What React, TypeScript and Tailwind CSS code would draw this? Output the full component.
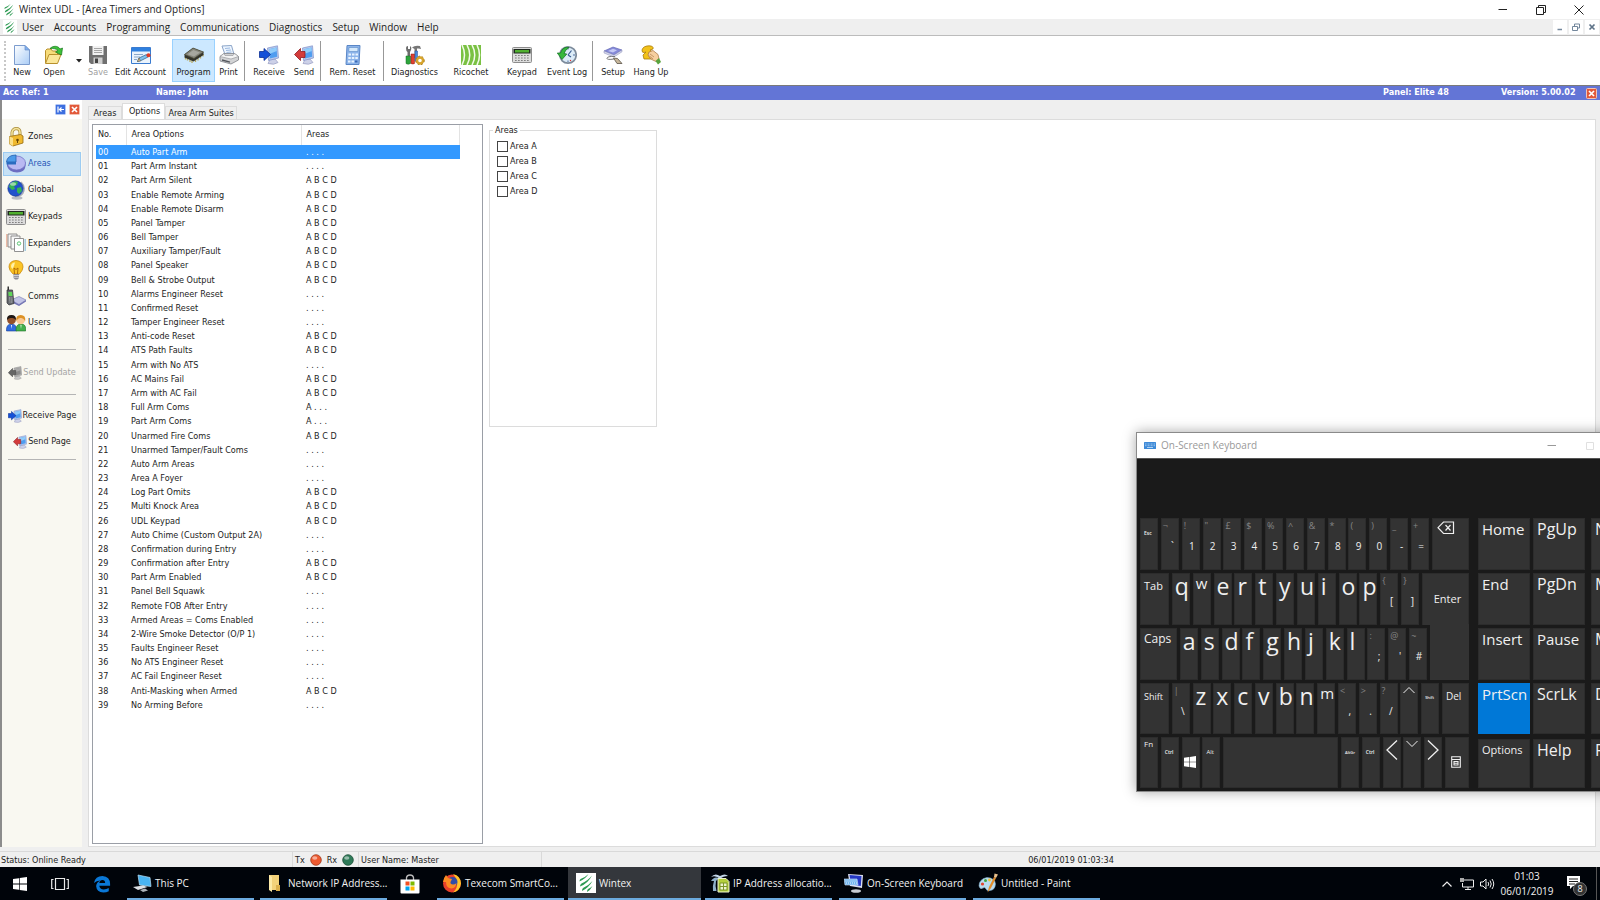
import React, { useState } from 'react';

type Glyph = React.FC<{ className?: string }>;

const WintexLogo: Glyph = ({ className }) => (
  <svg viewBox="0 0 20 20" className={className}>
    <g fill="#2c9a52">
      <path d="M12.500 1 Q9.500 6 3.500 8.500 Q3.500 6.500 4.500 6 Q9 4.500 12.500 1Z" />
      <path d="M16 2.500 Q12 10.500 4 13.500 Q4 11.500 5.500 10.500 Q11.500 8 16 2.500Z" />
      <path d="M16.500 8 Q12.500 15 6 18 Q6 16 7 15 Q12.500 12.500 16.500 8Z" />
      <path d="M16.500 13 Q14.500 17 11 19 Q11 17 12 16 Q14.500 15 16.500 13Z" />
    </g>
  </svg>
);

const NewIcon: Glyph = ({ className }) => (
  <svg viewBox="0 0 20 20" className={className}>
    <defs>
      <linearGradient id="sheet" x1="0" y1="0" x2="1" y2="1">
        <stop offset="0" stopColor="#fff" />
        <stop offset="1" stopColor="#a9ccf6" />
      </linearGradient>
    </defs>
    <path d="M2.500.500H13L17.500 5V19.500H2.500Z" fill="url(#sheet)" stroke="#7c9cce" />
    <path d="M13 .500V5H17.500Z" fill="#7fb0f0" stroke="#6b8fc8" strokeWidth=".7" />
  </svg>
);

const OpenIcon: Glyph = ({ className }) => (
  <svg viewBox="0 0 20 20" className={className}>
    <path d="M1.500 18V5.500L3 4H7L8.500 6H13.500V9" fill="#f7dc7a" stroke="#b8902c" />
    <path d="M1.500 18.500L5 9.500H17L13.500 18.500Z" fill="#fbe79a" stroke="#b8902c" />
    <path d="M6 3.500C9 .500 14 .500 16 4L18.500 3L17.500 10L11.500 7L14 5.500C12 3.500 9.500 3.500 6 3.500Z" fill="#3ec13a" stroke="#16771b" strokeWidth=".7" />
  </svg>
);

const SaveIcon: Glyph = ({ className }) => (
  <svg viewBox="0 0 20 20" className={className}>
    <path d="M1 1H19V19H3L1 17Z" fill="#707070" />
    <path d="M4.500 1H15.500V10H4.500Z" fill="#f2f2f2" />
    <path d="M6 3.500H14M6 5.500H14M6 7.500H14" stroke="#a5a5a5" />
    <path d="M5.500 12.500H14.500V19H5.500Z" fill="#cfcfcf" />
    <path d="M7 13.500H10V18H7Z" fill="#444" />
  </svg>
);

const EditAccountIcon: Glyph = ({ className }) => (
  <svg viewBox="0 0 20 20" className={className}>
    <path d="M.500 2.500H19.500V18.500H.500Z" fill="#eaf3fc" stroke="#3a7bd0" />
    <path d="M1 3H19V6.500H1Z" fill="#2f80df" />
    <path d="M3 9.500H12M3 12H9M3 14.500H6" stroke="#89a7c9" />
    <path d="M6.500 16.500L8 13L15.500 9.500L17 12L9.500 15.800Z" fill="#7fc1ec" stroke="#376a96" strokeWidth=".8" />
    <path d="M6.500 16.500L8 13L9.500 15.800Z" fill="#f0c98d" stroke="#5b4a2e" strokeWidth=".5" />
    <circle cx="17.500" cy="10.300" r="2" fill="#e03a25" />
  </svg>
);

const ChipIcon: Glyph = ({ className }) => (
  <svg viewBox="0 0 20 20" className={className}>
    <path d="M1.500 12V14.500M3.500 13V15.500M6 14.500V17M8 15.500V18M11.500 17V14.500M14 15.500V13M16.500 13.500V11M19 11.500V9" stroke="#b8aa62" strokeWidth="1.300" />
    <path d="M.500 9.500L9 3L19.500 7V10L9.500 16.500L.500 12.500Z" fill="#34342c" />
    <path d="M.500 9.500L9 3L19.500 7L10 13.500Z" fill="#85857b" stroke="#4a4a35" strokeWidth=".7" />
    <path d="M3.500 9.300L9.300 5L16 7.500L10 11.500Z" fill="#a7a79f" />
  </svg>
);

const PrinterIcon: Glyph = ({ className }) => (
  <svg viewBox="0 0 20 20" className={className}>
    <path d="M3 1L12.500.500L15 9.500H6Z" fill="#edf5ff" stroke="#8ba4c8" />
    <path d="M6 3.500L11 3M7 5.500L12 5M7.500 7.500L12.500 7" stroke="#9bb9df" />
    <path d="M1 11.500L5 8.500H15.500L19.500 11.500V15L12 19L1 16Z" fill="#d2d3d5" stroke="#7d8087" strokeWidth=".8" />
    <path d="M1 11.500L12 14L19.500 11.500L15.500 8.500L14 10.500H6L5 8.500Z" fill="#f4f4f4" stroke="#8e9096" strokeWidth=".6" />
    <path d="M3 15L11 17.200" stroke="#53565d" strokeWidth="1.300" />
  </svg>
);

const Monitor = ({ grey = false }: { grey?: boolean }) => (
  <>
    <path d="M11 14.500L16 14L19 17.500Q15 20.500 9 18.500Z" fill={grey ? '#c9c9c9' : '#cdd1e8'} stroke={grey ? '#999' : '#8b91ba'} strokeWidth=".6" />
    <path d="M8.500 3L18.500.800L19.500 13L9.500 15.500Z" fill={grey ? '#b5b5b5' : '#b9c8ec'} stroke={grey ? '#8c8c8c' : '#7f92ca'} strokeWidth=".7" />
    <path d="M10 4.300L17.500 2.500L18.200 11.800L10.800 13.500Z" fill={grey ? '#8b8b8b' : '#4f9df0'} />
    <path d="M10 4.300L17.500 2.500L17.800 6L10.300 9Z" fill={grey ? '#a9a9a9' : '#90ccfa'} />
  </>
);

const ReceiveIcon: Glyph = ({ className }) => (
  <svg viewBox="0 0 20 20" className={className}>
    <Monitor />
    <path d="M.500 6.500H5V3.500L11.500 9.500L5 15.500V12.500H.500Z" fill="#1450d8" stroke="#0b2f94" strokeWidth=".8" />
  </svg>
);

const SendIcon: Glyph = ({ className }) => (
  <svg viewBox="0 0 20 20" className={className}>
    <Monitor />
    <path d="M11 6.500H6.500V3.500L.500 9.500L6.500 15.500V12.500H11Z" fill="#d33b3b" stroke="#8e1c22" strokeWidth=".8" />
  </svg>
);

const SendGreyIcon: Glyph = ({ className }) => (
  <svg viewBox="0 0 20 20" className={className}>
    <Monitor grey />
    <path d="M11 6.500H6.500V3.500L.500 9.500L6.500 15.500V12.500H11Z" fill="#666" stroke="#444" strokeWidth=".8" />
  </svg>
);

const CalculatorIcon: Glyph = ({ className }) => (
  <svg viewBox="0 0 20 20" className={className}>
    <path d="M4 .500H17L16 19.500H3Z" fill="#8cb4ea" stroke="#5a86c6" />
    <path d="M6 2.500H15L14.800 6.500H5.800Z" fill="#d5e9fb" stroke="#4b7cbd" strokeWidth=".5" />
    <g fill="#e8f3ff">
      <path d="M5.500 8.500H8V10.500H5.500ZM9 8.500H11.500V10.500H9ZM12.500 8.500H15V10.500H12.500Z" />
      <path d="M5.300 12H7.800V14H5.300ZM8.800 12H11.300V14H8.800ZM12.300 12H14.800V14H12.300Z" />
      <path d="M5 15.500H7.500V17.500H5ZM8.500 15.500H11V17.500H8.500Z" />
    </g>
    <path d="M12 15.500H14.500V17.500H12Z" fill="#3a69b4" />
  </svg>
);

const ToolsIcon: Glyph = ({ className }) => (
  <svg viewBox="0 0 20 20" className={className}>
    <path d="M1 3Q1 1 3 1V4H5V1Q7 2 6 5L5 7V12H2.500V7Q1 6 1 3Z" fill="#6c6c6c" />
    <path d="M7 2.500Q10 0 15 1L16 4L13.500 3.500H12V13H9.500V4Z" fill="#777" />
    <path d="M1 11H5.500V18.500Q3 20 1 18.500Z" fill="#2ea53c" stroke="#126a20" strokeWidth=".5" />
    <path d="M6 9H9.500V18.500Q8 19.500 6 18.500Z" fill="#e04030" stroke="#8c1a12" strokeWidth=".5" />
    <path d="M10 6H12.500V16H10Z" fill="#4a8ae0" stroke="#214c94" strokeWidth=".5" />
    <circle cx="15" cy="15.500" r="3" fill="none" stroke="#d8a52c" strokeWidth="2.400" />
    <circle cx="15" cy="15.500" r="4.300" fill="none" stroke="#a87a18" strokeWidth="1" strokeDasharray="1.800 1.800" />
  </svg>
);

const RicochetIcon: Glyph = ({ className }) => (
  <svg viewBox="0 0 20 20" className={className}>
    <path d="M0 0H20V20H0Z" fill="#7ac143" />
    <path d="M1 0Q6 10 1 20M6 0Q11.500 10 6 20M11 0Q16.500 10 11 20M16 0Q21 10 16 20" fill="none" stroke="#f4faee" strokeWidth="1.500" />
  </svg>
);

const KeypadIcon: Glyph = ({ className }) => (
  <svg viewBox="0 0 20 20" className={className}>
    <rect x=".500" y="2.500" width="19" height="15" rx="1" fill="#dcdcdc" stroke="#8d8d8d" />
    <path d="M1.500 4H18.500V8.500H1.500Z" fill="#202820" />
    <path d="M3 5H17V7.500H3Z" fill="#4faf2f" />
    <path d="M3 10.500H17M3 13H17M3 15.500H17" stroke="#808080" strokeWidth="1" strokeDasharray="1.700 1.300" />
  </svg>
);

const EventLogIcon: Glyph = ({ className }) => (
  <svg viewBox="0 0 20 20" className={className}>
    <circle cx="11" cy="10" r="8.200" fill="#dcecf8" stroke="#7d8b9b" strokeWidth="1.700" />
    <path d="M11 3V4.500M11 15.500V17M16 10H18" stroke="#4f6c9d" />
    <path d="M11 10L14.500 5.500M11 10L14 12" stroke="#385a8f" strokeWidth="1.200" />
    <path d="M12 2.500Q6 1 3.500 8L.300 8L5 14.500L9.800 9L7 8.500Q8 5 12 2.500Z" fill="#36b83c" stroke="#117021" strokeWidth=".7" />
    <circle cx="13.500" cy="15.500" r=".7" fill="#d33" />
  </svg>
);

const SetupIcon: Glyph = ({ className }) => (
  <svg viewBox="0 0 20 20" className={className}>
    <path d="M1 6L10 2L19 5L11 10Z" fill="#8589d8" stroke="#5b5fae" strokeWidth=".6" />
    <path d="M1 6L11 10L19 5V6.800L11 12L1 8Z" fill="#d7d9ec" stroke="#8488b7" strokeWidth=".5" />
    <path d="M5 6L10 3.800L14 5.200L10 7.500Z" fill="#c5c9f5" />
    <path d="M12 11.500Q4 11 4 13.500Q4 15 11 14" fill="none" stroke="#777" />
    <path d="M10.500 13L14.500 13.500L19 18.500L14 18.500Z" fill="#c7b79c" stroke="#5a5348" strokeWidth=".8" />
  </svg>
);

const HangUpIcon: Glyph = ({ className }) => (
  <svg viewBox="0 0 20 20" className={className}>
    <path d="M1 5Q2 1 8 .800Q13 1 12 4L9 5L14 9L13 14L3 14L2 10L5 7L3 7.500Q1 8 1 5Z" fill="#f2c21a" stroke="#a97b0a" strokeWidth=".8" />
    <path d="M8 7L12 5.500L17 9.500L18 14L15 16.500Q11 15 9 13L7 10Z" fill="#f6cfa0" stroke="#a5703c" strokeWidth=".7" />
    <path d="M9 9L13 12M8.500 11L12 14" stroke="#a5703c" strokeWidth=".6" />
    <path d="M14.500 16L18 13L20 17L17 19.500Z" fill="#59a33e" />
  </svg>
);

const LockIcon: Glyph = ({ className }) => (
  <svg viewBox="0 0 20 20" className={className}>
    <path d="M6 9V5.500Q6.500 2 10 1.500Q14 1.500 14 5.500V8" fill="none" stroke="#a88a35" strokeWidth="3" />
    <path d="M6 9V5.500Q6.500 2 10 1.500Q14 1.500 14 5.500V8" fill="none" stroke="#f3e29a" strokeWidth="1.600" />
    <path d="M3.500 9.500L14.500 7.500L17 9V16L7 19L3.500 17Z" fill="#f0b92e" stroke="#96690f" strokeWidth=".8" />
    <path d="M3.500 9.500L7 11V19L3.500 17Z" fill="#fbe08a" />
    <circle cx="11.500" cy="13" r="1.300" fill="#694806" />
    <path d="M11 13H12V16H11Z" fill="#694806" />
  </svg>
);

const PieIcon: Glyph = ({ className }) => (
  <svg viewBox="0 0 20 20" className={className}>
    <path d="M1 8V12Q3 18 11 18.500Q19 18 19.500 12V8Z" fill="#6d6ec2" />
    <ellipse cx="10.500" cy="9" rx="9" ry="7" fill="#b9b9f2" stroke="#6b6cc0" strokeWidth=".7" />
    <path d="M10 8V1L6 1.500Q1 3 .500 8Z" fill="#4c9ae8" stroke="#245fae" strokeWidth=".8" />
    <path d="M.500 8H10V10.500H.500Z" fill="#2a6cc0" />
  </svg>
);

const GlobeIcon: Glyph = ({ className }) => (
  <svg viewBox="0 0 20 20" className={className}>
    <ellipse cx="11" cy="18" rx="5.500" ry="1.700" fill="#b9bdc4" />
    <path d="M15 2Q20 7 17 13Q14 17 9 16.500" fill="none" stroke="#a7adb8" strokeWidth="1.500" />
    <circle cx="9.500" cy="8.500" r="7.700" fill="#2052cc" stroke="#17348a" strokeWidth=".6" />
    <path d="M4 4Q8 0 12 2L11 5L8 6L9 9L6 10L3 7ZM11 8L15 7L16 11L13 14L11 12Z" fill="#34b354" />
    <ellipse cx="7" cy="4" rx="3" ry="1.800" fill="#fff" opacity=".5" />
  </svg>
);

const ExpandersIcon: Glyph = ({ className }) => (
  <svg viewBox="0 0 20 20" className={className}>
    <path d="M.800 1.500V14" stroke="#dd7755" strokeWidth="1.500" strokeDasharray="1 1" />
    <path d="M2 1H11V14H2Z" fill="#f3f3f3" stroke="#858585" strokeWidth=".9" />
    <path d="M5 3H14V16H5Z" fill="#f7f7f7" stroke="#858585" strokeWidth=".9" />
    <path d="M8.500 5.500H17.500V18.500H8.500Z" fill="#fff" stroke="#858585" strokeWidth=".9" />
    <circle cx="13" cy="10.500" r="1.700" fill="none" stroke="#4bbd65" strokeWidth=".9" />
    <path d="M19.200 6.500V18.500" stroke="#4aa0d0" strokeWidth="1.500" strokeDasharray="1 1" />
  </svg>
);

const BulbIcon: Glyph = ({ className }) => (
  <svg viewBox="0 0 20 20" className={className}>
    <path d="M10 .500Q17 1 17 7Q17 10 13.500 14H7Q3 10 3 7Q3 1 10 .500Z" fill="#fbc425" stroke="#c98a0c" strokeWidth=".8" />
    <path d="M5 6Q5.500 2.500 9 2.500Q8 7 6.500 9Q5 8 5 6Z" fill="#fff0a8" />
    <path d="M8.500 14L8 8L10 9.500L12 8L11.500 14" fill="none" stroke="#b26d07" />
    <path d="M7.500 14H13V18L11.500 19.500H9L7.500 18Z" fill="#8c8c95" />
    <path d="M7.500 15.500H13M7.500 17.300H13" stroke="#dfdfe5" strokeWidth=".8" />
  </svg>
);

const CommsIcon: Glyph = ({ className }) => (
  <svg viewBox="0 0 20 20" className={className}>
    <path d="M5 14L13 10.500L20 14L13 18.500Z" fill="#c2c4e6" stroke="#8486b9" strokeWidth=".7" />
    <path d="M5 14L13 18.500L20 14V15.500L13 20L5 16Z" fill="#7173b4" />
    <path d="M1.500.500H3V5H1.500Z" fill="#333" />
    <path d="M1 4H6.500L8 17.500L3 19L1 17Z" fill="#64676c" stroke="#303236" strokeWidth=".7" />
    <path d="M2.300 6H6L6.500 10H2.700Z" fill="#5fd457" />
    <path d="M3 12H6.500M3.200 14H6.800M3.500 16H7" stroke="#c4c7cc" strokeWidth=".9" strokeDasharray="1 .600" />
  </svg>
);

const UsersIcon: Glyph = ({ className }) => (
  <svg viewBox="0 0 20 20" className={className}>
    <path d="M.500 18Q0 11 5.500 11Q11 11 10.500 18Z" fill="#2f6be0" stroke="#173d94" strokeWidth=".6" />
    <circle cx="5.500" cy="7" r="4.300" fill="#93512a" />
    <path d="M1 7Q.500 2 5.500 2Q10.300 2 10 7Q8 4.500 5.500 5Q3 4.500 1 7Z" fill="#1e1714" />
    <path d="M10 18Q9.500 11 15 11Q20.500 11 19.700 18Z" fill="#44b04c" stroke="#1e7228" strokeWidth=".6" />
    <circle cx="14.700" cy="7" r="4.300" fill="#fac892" />
    <path d="M10.300 8Q9.500 2 14.700 2Q20 2 19.200 8Q17 4.500 14.700 5Q12 4.500 10.300 8Z" fill="#dd9226" />
    <path d="M5 12L5.500 16L6 12ZM14.500 12L15 16L15.500 12Z" fill="#fff" />
  </svg>
);

const CloseSquare: Glyph = ({ className }) => (
  <svg viewBox="0 0 11 11" className={className}>
    <rect x=".500" y=".500" width="10" height="10" rx="1" fill="#e2593a" stroke="#f3c3b5" />
    <path d="M3 3L8 8M8 3L3 8" stroke="#fff" strokeWidth="1.700" />
  </svg>
);

const PinSquare: Glyph = ({ className }) => (
  <svg viewBox="0 0 11 11" className={className}>
    <rect x=".500" y=".500" width="10" height="10" rx="1" fill="#3d6fe0" stroke="#b4c7f3" />
    <path d="M3 2.500V8.500M4.500 5.500H9M6.500 3.500L4.500 5.500L6.500 7.500" fill="none" stroke="#fff" strokeWidth="1.200" />
  </svg>
);

const WindowsIcon: Glyph = ({ className }) => (
  <svg viewBox="0 0 14 14" className={className}>
    <path d="M0 2L6 1.200V6.600H0ZM6.700 1.100L14 0V6.600H6.700ZM0 7.400H6V12.800L0 12ZM6.700 7.400H14V14L6.700 12.900Z" fill="#fff" />
  </svg>
);

const TaskViewIcon: Glyph = ({ className }) => (
  <svg viewBox="0 0 18 14" className={className}>
    <path d="M4.500 1.500H13.500V12.500H4.500ZM2.500 2.500H.700V11.500H2.500M15.500 2.500H17.300V11.500H15.500" fill="none" stroke="#e8e8e8" strokeWidth="1.200" />
  </svg>
);

const EdgeIcon: Glyph = ({ className }) => (
  <svg viewBox="0 0 20 20" className={className}>
    <path d="M1 9Q2.500 1 10.500 1Q19 1.500 19 10V12H7Q7.500 16 12 16Q15 16 17.500 14.500V18Q15 19.500 11.500 19.500Q4 19 3.500 12.500Q3.500 8.500 8 6Q4 6 1 9ZM7 8.800H13.500Q13.500 5.500 10.500 5.500Q7.500 5.500 7 8.800Z" fill="#0a78d7" />
  </svg>
);

const ThisPcIcon: Glyph = ({ className }) => (
  <svg viewBox="0 0 20 20" className={className}>
    <path d="M6 2L18 4.500L19 13.500L7.500 12Z" fill="#49b4f2" stroke="#b9dff5" strokeWidth=".7" />
    <path d="M1 14L11 12.500L15.500 14L6 17Z" fill="#dde1e5" />
    <path d="M8 17L13 15.500L16 17.500L11 19Z" fill="#aeb4ba" />
  </svg>
);

const FolderIcon: Glyph = ({ className }) => (
  <svg viewBox="0 0 20 20" className={className}>
    <path d="M4 2H14V17H4Z" fill="#f3d27a" />
    <path d="M4 2L7 4V19L4 17Z" fill="#fdeaa7" />
    <path d="M11 12H15V18H11Z" fill="#dcb04c" />
  </svg>
);

const StoreIcon: Glyph = ({ className }) => (
  <svg viewBox="0 0 20 20" className={className}>
    <path d="M6.500 6V3.500Q7 1 10 1Q13 1 13.500 3.500V6" fill="none" stroke="#bbb" strokeWidth="1.300" />
    <path d="M.500 5.500H19.500V18.500Q19.500 19.500 18.500 19.500H1.500Q.500 19.500.500 18.500Z" fill="#fff" />
    <path d="M5.500 7.500H9.500V11.500H5.500Z" fill="#f25022" />
    <path d="M10.500 7.500H14.500V11.500H10.500Z" fill="#7fba00" />
    <path d="M5.500 12.500H9.500V16.500H5.500Z" fill="#00a4ef" />
    <path d="M10.500 12.500H14.500V16.500H10.500Z" fill="#ffb900" />
  </svg>
);

const FirefoxIcon: Glyph = ({ className }) => (
  <svg viewBox="0 0 20 20" className={className}>
    <circle cx="10" cy="10.500" r="9" fill="#e8402a" />
    <path d="M11 1Q19 3 19 10.500Q18 18 11 19.500Q16 15 15 9Q14 4 11 1Z" fill="#ffc229" />
    <circle cx="10.500" cy="9" r="5" fill="#2f4ca8" />
    <path d="M1 9Q2 4 4 2L6 5L10 6L8.500 9Q8 11 11 11.500Q13 11.500 14.500 10Q14 15 9.500 15.500Q4 15 4 9Z" fill="#fb8b22" />
  </svg>
);

const CalcSheetIcon: Glyph = ({ className }) => (
  <svg viewBox="0 0 20 20" className={className}>
    <path d="M1 4Q5 -.500 10 3Q15 0 18 3Q13 3 10 6Q6 2 1 4Z" fill="#c4d7e8" />
    <path d="M1 8Q4 3 9 5L6 8Q5 12 6.500 18H3Q2.500 12 4 8Z" fill="#8fb0ca" />
    <path d="M8 5.500H16L19 8.500V19H8Z" fill="#b4cf3d" stroke="#edf3cf" />
    <path d="M10 10H17V17H10ZM10 13.500H17M13.500 10V17" fill="#eef4cf" stroke="#7b962a" />
  </svg>
);

const OskIcon: Glyph = ({ className }) => (
  <svg viewBox="0 0 20 20" className={className}>
    <ellipse cx="12" cy="18" rx="5" ry="1.800" fill="#c9ccd2" />
    <path d="M4 1L19 2L18 15L6 13Z" fill="#dadff0" />
    <path d="M5.500 2L17.500 3L16.800 13L7 11.500Z" fill="#2438c4" />
    <path d="M0 6H13L14 12H1Z" fill="#6fb4ee" stroke="#d8eafb" strokeWidth=".6" />
    <path d="M1.500 8H13M2 10H13" stroke="#e9f5ff" strokeDasharray="1 1" />
  </svg>
);

const PaintIcon: Glyph = ({ className }) => (
  <svg viewBox="0 0 20 20" className={className}>
    <path d="M1 13Q1 6 9 4.500Q17 5 17.500 11Q17 17 12 17.500Q9 18.500 8 16Q7 13.500 5 15Q2 17 1 13Z" fill="#b9dcf0" stroke="#7daac6" strokeWidth=".6" />
    <circle cx="4.500" cy="11" r="1.600" fill="#e2432f" />
    <circle cx="7.500" cy="7.500" r="1.500" fill="#3ea845" />
    <circle cx="11.500" cy="7" r="1.400" fill="#f1c232" />
    <path d="M9.500 19.500L11 14L16 4L18 5L13 15Z" fill="#e28d2c" />
    <path d="M16 4L16.500.500L20 1.500L18 5Z" fill="#e9c08c" />
  </svg>
);

const Orb = ({ color, rim }: { color: string; rim: string }) => (
  <svg viewBox="0 0 12 12" className="size-3">
    <circle cx="6" cy="6" r="5.300" fill={color} stroke={rim} strokeWidth=".8" />
    <ellipse cx="4.800" cy="4" rx="2.600" ry="1.800" fill="#fff" opacity=".5" />
  </svg>
);

const MENU = ['User', 'Accounts', 'Programming', 'Communications', 'Diagnostics', 'Setup', 'Window', 'Help'];

type Tool = { label: string; icon: Glyph; width: string; active?: boolean; disabled?: boolean };

const TOOL_GROUPS: Tool[][] = [
  [
    { label: 'Save', icon: SaveIcon, width: 'w-[22px]', disabled: true },
    { label: 'Edit Account', icon: EditAccountIcon, width: 'w-[63px]' },
    { label: 'Program', icon: ChipIcon, width: 'w-[43px]', active: true },
    { label: 'Print', icon: PrinterIcon, width: 'w-[27px]' },
  ],
  [
    { label: 'Receive', icon: ReceiveIcon, width: 'w-[42px]' },
    { label: 'Send', icon: SendIcon, width: 'w-[28px]' },
  ],
  [{ label: 'Rem. Reset', icon: CalculatorIcon, width: 'w-[57px]' }],
  [
    { label: 'Diagnostics', icon: ToolsIcon, width: 'w-[55px]' },
    { label: 'Ricochet', icon: RicochetIcon, width: 'w-[58px]' },
    { label: 'Keypad', icon: KeypadIcon, width: 'w-[44px]' },
    { label: 'Event Log', icon: EventLogIcon, width: 'w-[46px]' },
  ],
  [
    { label: 'Setup', icon: SetupIcon, width: 'w-[34px]' },
    { label: 'Hang Up', icon: HangUpIcon, width: 'w-[42px]' },
  ],
];

const PAGES: { label: string; icon: Glyph }[] = [
  { label: 'Zones', icon: LockIcon },
  { label: 'Areas', icon: PieIcon },
  { label: 'Global', icon: GlobeIcon },
  { label: 'Keypads', icon: KeypadIcon },
  { label: 'Expanders', icon: ExpandersIcon },
  { label: 'Outputs', icon: BulbIcon },
  { label: 'Comms', icon: CommsIcon },
  { label: 'Users', icon: UsersIcon },
];

const ALL = 'A B C D';
const NONE = '. . . .';

const OPTIONS: [string, string][] = [
  ['Auto Part Arm', NONE],
  ['Part Arm Instant', NONE],
  ['Part Arm Silent', ALL],
  ['Enable Remote Arming', ALL],
  ['Enable Remote Disarm', ALL],
  ['Panel Tamper', ALL],
  ['Bell Tamper', ALL],
  ['Auxiliary Tamper/Fault', ALL],
  ['Panel Speaker', ALL],
  ['Bell & Strobe Output', ALL],
  ['Alarms Engineer Reset', NONE],
  ['Confirmed Reset', NONE],
  ['Tamper Engineer Reset', NONE],
  ['Anti-code Reset', ALL],
  ['ATS Path Faults', ALL],
  ['Arm with No ATS', NONE],
  ['AC Mains Fail', ALL],
  ['Arm with AC Fail', ALL],
  ['Full Arm Coms', 'A . . .'],
  ['Part Arm Coms', 'A . . .'],
  ['Unarmed Fire Coms', ALL],
  ['Unarmed Tamper/Fault Coms', NONE],
  ['Auto Arm Areas', NONE],
  ['Area A Foyer', NONE],
  ['Log Part Omits', ALL],
  ['Multi Knock Area', ALL],
  ['UDL Keypad', ALL],
  ['Auto Chime (Custom Output 2A)', NONE],
  ['Confirmation during Entry', NONE],
  ['Confirmation after Entry', ALL],
  ['Part Arm Enabled', ALL],
  ['Panel Bell Squawk', NONE],
  ['Remote FOB After Entry', NONE],
  ['Armed Areas = Coms Enabled', NONE],
  ['2-Wire Smoke Detector (O/P 1)', NONE],
  ['Faults Engineer Reset', NONE],
  ['No ATS Engineer Reset', NONE],
  ['AC Fail Engineer Reset', NONE],
  ['Anti-Masking when Armed', ALL],
  ['No Arming Before', NONE],
];

const ToolButton = ({ tool }: { tool: Tool }) => {
  const Icon = tool.icon;
  return (
    <button
      disabled={tool.disabled}
      className={`${tool.width} flex h-[43px] flex-col items-center border pt-[5px] leading-[14px] whitespace-nowrap ${
        tool.active ? 'border-[#99d1ff] bg-[#cce8ff]' : 'border-transparent'
      } ${tool.disabled ? 'text-[#a0a0a0]' : ''}`}
    >
      <Icon className="size-5 shrink-0" />
      {tool.label}
    </button>
  );
};

const TitleBar = () => (
  <header className="flex h-[19px] items-center bg-white pr-[2px] pl-[2px] font-['Open_Sans',sans-serif] text-[10px]">
    <WintexLogo className="size-[14px]" />
    <h1 className="flex-1 pl-[3px]">Wintex UDL - [Area Timers and Options]</h1>
    <div className="flex">
      <button aria-label="Minimize" className="flex w-[38px] justify-center">
        <svg viewBox="0 0 10 10" className="size-[10px]"><path d="M.500 4.500H9" stroke="#222" /></svg>
      </button>
      <button aria-label="Restore" className="flex w-[38px] justify-center">
        <svg viewBox="0 0 10 10" className="size-[10px]"><path d="M.500 2.500H7.500V9.500H.500ZM2.500 2.500V.500H9.500V7.500H7.500" fill="none" stroke="#222" /></svg>
      </button>
      <button aria-label="Close" className="flex w-[38px] justify-center">
        <svg viewBox="0 0 10 10" className="size-[10px]"><path d="M.500.500L9.500 9.500M9.500.500L.500 9.500" stroke="#222" /></svg>
      </button>
    </div>
  </header>
);

const MenuBar = () => (
  <nav className="flex h-[17px] items-center border-b border-[#bcbcbc] bg-[#efefef] pl-[3px] font-['Open_Sans',sans-serif] text-[10px]">
    <WintexLogo className="mr-[5px] size-[14px] bg-white" />
    <div className="flex flex-1 gap-[10px]">
      {MENU.map((item) => (
        <button key={item} className="leading-4">{item}</button>
      ))}
    </div>
    <div className="flex gap-[2px] pr-[1px]">
      <button aria-label="Minimize child" className="flex size-[14px] items-center justify-center bg-white">
        <svg viewBox="0 0 8 8" className="size-2"><path d="M1.500 6.500H6" stroke="#73879c" strokeWidth="1.500" /></svg>
      </button>
      <button aria-label="Restore child" className="flex size-[14px] items-center justify-center bg-white">
        <svg viewBox="0 0 8 8" className="size-2"><path d="M.500 3.500H5.500V7.500H.500ZM2.500 3V1H7.500V5H6" fill="none" stroke="#73879c" /></svg>
      </button>
      <button aria-label="Close child" className="flex size-[14px] items-center justify-center bg-white">
        <svg viewBox="0 0 8 8" className="size-2"><path d="M1.500 1.500L6.500 6.500M6.500 1.500L1.500 6.500" stroke="#5e7388" strokeWidth="1.700" /></svg>
      </button>
    </div>
  </nav>
);

const Toolbar = () => (
  <div className="flex h-[49px] items-center bg-white pl-1">
    <div className="h-10 border-l-2 border-dotted border-[#c8c8c8]" />
    <ToolButton tool={{ label: 'New', icon: NewIcon, width: 'w-8' }} />
    <ToolButton tool={{ label: 'Open', icon: OpenIcon, width: 'w-8' }} />
    <button aria-label="Open recent" className="flex w-[17px] justify-center">
      <svg viewBox="0 0 6 4" className="h-1 w-[6px]"><path d="M0 0H6L3 3.500Z" fill="#222" /></svg>
    </button>
    {TOOL_GROUPS.map((group, i) => (
      <React.Fragment key={i}>
        {i > 0 && <div className="mx-[2px] h-10 w-[2px] border-l border-[#989898]" />}
        {group.map((tool) => (
          <ToolButton key={tool.label} tool={tool} />
        ))}
      </React.Fragment>
    ))}
  </div>
);

const Sidebar = () => {
  const [page, setPage] = useState('Areas');
  return (
    <aside className="flex w-[82px] shrink-0 flex-col border-l-2 border-[#8c8c8c] bg-[#f9f8f1]">
      <div className="flex h-[19px] items-center justify-end gap-[3px] bg-white pr-[2px]">
        <button aria-label="Pin panel"><PinSquare className="size-[11px]" /></button>
        <button aria-label="Close panel"><CloseSquare className="size-[11px]" /></button>
      </div>
      <div className="mt-[6px] flex h-[210px] flex-col justify-between px-[1px]">
        {PAGES.map(({ label, icon: Icon }) => (
          <button
            key={label}
            onClick={() => setPage(label)}
            className={`flex h-6 items-center gap-[2px] border pl-[2px] ${
              page === label ? 'border-[#9ccbf2] bg-[#c6e1f5] text-[#2657b8]' : 'border-transparent'
            }`}
          >
            <Icon className="size-5" />
            {label}
          </button>
        ))}
      </div>
      <hr className="mx-[6px] mt-[14px] border-[#b5b5b5]" />
      <button disabled className="mt-4 flex h-[14px] items-center justify-center gap-[1px] whitespace-nowrap text-[#a5a5a5]">
        <SendGreyIcon className="size-[14px]" />
        Send Update
      </button>
      <hr className="mx-[6px] mt-[14px] border-[#b5b5b5]" />
      <button className="mt-[14px] flex h-[14px] items-center justify-center gap-[1px] whitespace-nowrap">
        <ReceiveIcon className="size-[14px]" />
        Receive Page
      </button>
      <button className="mt-3 flex h-[14px] items-center justify-center gap-[1px] whitespace-nowrap">
        <SendIcon className="size-[14px]" />
        Send Page
      </button>
      <hr className="mx-[6px] mt-[10px] border-[#b5b5b5]" />
    </aside>
  );
};

const OptionsList = () => {
  const [selected, setSelected] = useState(0);
  return (
    <div className="w-[391px] border border-[#9a9ea6] pl-[3px]">
      <table className="h-[587px] w-[364px] table-fixed border-collapse text-left">
        <thead>
          <tr className="h-5">
            <th className="w-[30px] border-r border-[#e3e3e3] pl-[2px] font-normal">No.</th>
            <th className="w-[175px] border-r border-[#e3e3e3] pl-[5px] font-normal">Area Options</th>
            <th className="border-r border-[#e3e3e3] pl-[5px] font-normal">Areas</th>
          </tr>
        </thead>
        <tbody>
          {OPTIONS.map(([name, areas], i) => (
            <tr
              key={name}
              onClick={() => setSelected(i)}
              className={`leading-[14px] ${selected === i ? 'bg-[#3399ff] text-white' : ''}`}
            >
              <td className="pl-[2px]">{String(i).padStart(2, '0')}</td>
              <td className="pl-[5px] whitespace-nowrap">{name}</td>
              <td className="pl-[5px] whitespace-nowrap">{areas}</td>
            </tr>
          ))}
        </tbody>
      </table>
    </div>
  );
};

const AreasGroup = () => (
  <fieldset className="h-[303px] w-[168px] self-start border border-[#dcdcdc] pl-[7px]">
    <legend className="-ml-1 px-[2px] leading-3">Areas</legend>
    <div className="flex flex-col gap-[2px] pt-1">
      {['A', 'B', 'C', 'D'].map((area) => (
        <label key={area} className="flex h-[13px] items-center gap-[2px]">
          <input type="checkbox" className="size-[11px] appearance-none border border-[#444] bg-white checked:bg-[#3399ff]" />
          Area {area}
        </label>
      ))}
    </div>
  </fieldset>
);

const Workspace = () => (
  <div className="flex flex-1 flex-col bg-[#efefef] pt-[3px] pr-1 pl-[6px]">
    <div className="flex h-4 items-end">
      <button className="h-[13px] w-[34px] border border-b-0 border-[#dcdcdc] leading-[11px]">Areas</button>
      <button className="h-4 w-[43px] border border-b-0 border-[#dcdcdc] bg-white pl-[2px] leading-3">
        <span className="block pb-[2px]">Options</span>
      </button>
      <button className="h-[13px] w-[72px] border border-b-0 border-[#dcdcdc] leading-[11px] whitespace-nowrap">Area Arm Suites</button>
    </div>
    <div className="flex flex-1 gap-[6px] border border-[#dcdcdc] bg-white pt-1 pb-[2px] pl-[3px]">
      <OptionsList />
      <AreasGroup />
    </div>
  </div>
);

const KEY = 'shrink-0 border border-[#2c2c2c] bg-[#333333] text-left whitespace-nowrap text-[#f0f0f0]';

const SymbolKey = ({ top, bottom }: { top: string; bottom: string }) => (
  <button className={`${KEY} flex w-[18px] flex-col px-[1px] leading-[14px]`}>
    <span className="text-[9px] text-[#858585]">{top}</span>
    <span className="mt-[6px] self-end pr-[3px] text-[10px]">{bottom}</span>
  </button>
);

const LetterKey = ({ letter }: { letter: string }) => (
  <button className={`${KEY} flex w-[18px] items-start pl-[2px]`}>
    <span className={letter === 'w' || letter === 'm' ? 'text-[15px] leading-[18px]' : 'text-[23px] leading-6'}>{letter}</span>
  </button>
);

const TextKey = ({ label, look, width }: { label: string; look: string; width: string }) => (
  <button className={`${KEY} ${width} flex items-start pl-[3px]`}>
    <span className={look}>{label}</span>
  </button>
);

const IconKey = ({ label, width, children }: { label: string; width: string; children: React.ReactNode }) => (
  <button aria-label={label} className={`${KEY} ${width} flex justify-center`}>{children}</button>
);

const NUMBER_ROW = ['¬`', '!1', '"2', '£3', '$4', '%5', '^6', '&7', '*8', '(9', ')0', '_-', '+='];
const TINY = 'pt-[11px] text-[5px] font-semibold leading-[6px]';

const NAV_KEYS: { label: string; look: string; active?: boolean }[][] = [
  [
    { label: 'Home', look: 'text-[15px] leading-[21px]' },
    { label: 'PgUp', look: 'text-[16px] leading-[20px]' },
    { label: 'Nav', look: 'text-[16px] leading-[20px]' },
  ],
  [
    { label: 'End', look: 'text-[15px] leading-[21px]' },
    { label: 'PgDn', look: 'text-[16px] leading-[20px]' },
    { label: 'Mv Up', look: 'text-[16px] leading-[20px]' },
  ],
  [
    { label: 'Insert', look: 'text-[15px] leading-[21px]' },
    { label: 'Pause', look: 'text-[15px] leading-[21px]' },
    { label: 'Mv Dn', look: 'text-[16px] leading-[20px]' },
  ],
  [
    { label: 'PrtScn', look: 'text-[15px] leading-[21px]', active: true },
    { label: 'ScrLk', look: 'text-[16px] leading-[20px]' },
    { label: 'Dock', look: 'text-[16px] leading-[20px]' },
  ],
  [
    { label: 'Options', look: 'text-[11px] leading-[20px]' },
    { label: 'Help', look: 'text-[16px] leading-[20px]' },
    { label: 'Fade', look: 'text-[16px] leading-[20px]' },
  ],
];

const OnScreenKeyboard = () => (
  <section
    aria-label="On-Screen Keyboard"
    className="absolute top-[432px] left-[1136px] w-[511px] border border-[#8a8a8a] bg-[#1a1a1a] font-['Open_Sans',sans-serif] shadow-[0_0_12px_rgba(0,0,0,0.35)]"
  >
    <div className="flex h-[25px] items-center bg-white pl-[7px] text-[10px] text-[#999999]">
      <svg viewBox="0 0 12 7" className="h-[7px] w-3">
        <rect width="12" height="7" rx=".500" fill="#3d8ad8" />
        <path d="M1 2H11M1 3.700H11" stroke="#cfe4f8" strokeWidth=".7" strokeDasharray=".900 .600" />
        <path d="M3 5.500H9" stroke="#cfe4f8" strokeWidth=".8" />
      </svg>
      <h2 className="w-[391px] pl-[5px]">On-Screen Keyboard</h2>
      <button aria-label="Minimize keyboard" className="w-[38px]">
        <svg viewBox="0 0 10 10" className="size-[10px]"><path d="M.500 4.500H9" stroke="#999" /></svg>
      </button>
      <button aria-label="Maximize keyboard">
        <svg viewBox="0 0 10 10" className="size-[10px]"><path d="M1.500 1.500H8.500V8.500H1.500Z" fill="none" stroke="#e0e0e0" /></svg>
      </button>
    </div>
    <div className="flex gap-[9px] border-t border-[#555555] px-[3px] pt-[59px] pb-[3px]">
      <div className="grid w-[329px] grid-rows-[52px_52px_52px_51px_51px] gap-y-[3px]">
        <div className="flex justify-between">
          <TextKey label="Esc" look={TINY} width="w-[18px]" />
          {NUMBER_ROW.map((k) => (
            <SymbolKey key={k} top={k[0]} bottom={k[1]} />
          ))}
          <IconKey label="Backspace" width="w-[37px]">
            <svg viewBox="0 0 18 14" className="mt-[2px] mr-[9px] h-[14px] w-[18px]">
              <path d="M6.500 1H16.500V12.500H6.500L1 6.700ZM8.500 4L13.500 9.500M13.500 4L8.500 9.500" fill="none" stroke="#f0f0f0" strokeWidth="1.200" />
            </svg>
          </IconKey>
        </div>
        <div className="flex justify-between">
          <TextKey label="Tab" look="pt-1 text-[11px] leading-4" width="w-[29px]" />
          {'qwertyuiop'.split('').map((l) => (
            <LetterKey key={l} letter={l} />
          ))}
          <SymbolKey top="{" bottom="[" />
          <SymbolKey top="}" bottom="]" />
          <button className={`${KEY} flex w-[47px] justify-center border-b-0 pt-[17px] pl-1 text-[11px] leading-4`}>Enter</button>
        </div>
        <div className="flex justify-between">
          <TextKey label="Caps" look="text-[12px] leading-5" width="w-[37px]" />
          {'asdfghjkl'.split('').map((l) => (
            <LetterKey key={l} letter={l} />
          ))}
          <SymbolKey top=":" bottom=";" />
          <SymbolKey top="@" bottom="'" />
          <SymbolKey top="~" bottom="#" />
          {/* lower half of the Enter key */}
          <div className="-mt-1 w-[39px] bg-[#333333]" />
        </div>
        <div className="flex justify-between">
          <TextKey label="Shift" look="pt-[5px] text-[9px] leading-4" width="w-[29px]" />
          <SymbolKey top="|" bottom="\" />
          {'zxcvbnm'.split('').map((l) => (
            <LetterKey key={l} letter={l} />
          ))}
          <SymbolKey top="<" bottom="," />
          <SymbolKey top=">" bottom="." />
          <SymbolKey top="?" bottom="/" />
          <IconKey label="Up" width="w-[18px]">
            <svg viewBox="0 0 12 8" className="mt-[2px] h-2 w-3"><path d="M.500 7L6 1.500L11.500 7" fill="none" stroke="#f0f0f0" /></svg>
          </IconKey>
          <TextKey label="Shift" look="pt-[11px] text-[4px] font-semibold leading-[6px]" width="w-[18px]" />
          <TextKey label="Del" look="pt-1 text-[10px] leading-4" width="w-[27px]" />
        </div>
        <div className="flex justify-between">
          <TextKey label="Fn" look="text-[8px] leading-3" width="w-[18px]" />
          <TextKey label="Ctrl" look={TINY} width="w-[18px]" />
          <IconKey label="Windows" width="w-[18px]">
            <WindowsIcon className="mt-[18px] mr-[1px] size-3" />
          </IconKey>
          <TextKey label="Alt" look="pt-[11px] text-[6px] leading-[6px]" width="w-[18px]" />
          <button aria-label="Space" className={`${KEY} w-[115px]`} />
          <TextKey label="AltGr" look="pt-[12px] text-[4px] font-semibold leading-[6px]" width="w-[18px]" />
          <TextKey label="Ctrl" look={TINY} width="w-[18px]" />
          <IconKey label="Left" width="w-[18px]">
            <svg viewBox="0 0 12 20" className="mt-[2px] h-5 w-3"><path d="M11 .500L1 10L11 19.500" fill="none" stroke="#f0f0f0" strokeWidth="1.300" /></svg>
          </IconKey>
          <IconKey label="Down" width="w-[18px]">
            <svg viewBox="0 0 12 8" className="mt-[2px] h-2 w-3"><path d="M.500 1L6 6.500L11.500 1" fill="none" stroke="#f0f0f0" /></svg>
          </IconKey>
          <IconKey label="Right" width="w-[18px]">
            <svg viewBox="0 0 12 20" className="mt-[2px] h-5 w-3"><path d="M1 .500L11 10L1 19.500" fill="none" stroke="#f0f0f0" strokeWidth="1.300" /></svg>
          </IconKey>
          <IconKey label="Menu" width="w-[24px]">
            <svg viewBox="0 0 10 12" className="mt-[18px] mr-[1px] h-3 w-[10px]">
              <path d="M.700.700H9.300V11.300H.700ZM.700 3.500H9.300M3 5.500H7V9H3ZM3 7.200H7" fill="none" stroke="#f0f0f0" strokeWidth="1.100" />
            </svg>
          </IconKey>
        </div>
      </div>
      <div className="grid grid-cols-[52px_52px_52px] grid-rows-[52px_52px_52px_51px_51px] gap-[3px]">
        {NAV_KEYS.flat().map(({ label, look, active }, i) => (
          <button
            key={label}
            className={`flex items-start border pl-[3px] whitespace-nowrap text-[#f0f0f0] ${
              active ? 'border-[#0078d7] bg-[#0078d7]' : 'border-[#2c2c2c] bg-[#333333]'
            } ${i >= 12 ? 'mt-[2px]' : ''} ${i % 3 === 2 ? 'ml-[3px]' : ''}`}
          >
            <span className={look}>{label}</span>
          </button>
        ))}
      </div>
    </div>
  </section>
);

const StatusBar = () => (
  <footer className="flex h-4 shrink-0 items-center border-t border-[#d9d9d9] bg-[#efefef] leading-4">
    <p className="w-[292px] pl-[1px]">Status: Online Ready</p>
    <div className="flex h-full w-[66px] items-center gap-[5px] border-l border-[#d9d9d9] pl-[2px]">
      Tx <Orb color="#ee5a30" rim="#a23a1c" /> Rx <Orb color="#2f7a58" rim="#1d4f39" />
    </div>
    <p className="h-full w-[184px] border-x border-[#d9d9d9] pl-[2px]">User Name: Master</p>
    <p className="flex-1 text-center">06/01/2019 01:03:34</p>
  </footer>
);

type Task = { label: string; icon: Glyph; look: string; active?: boolean };

const TASKS: Task[] = [
  { label: 'Texecom SmartCo...', icon: FirefoxIcon, look: 'w-[127px] ml-[4px] pl-[5px]' },
  { label: 'Wintex', icon: WintexLogo, look: 'w-[133px] ml-[4px] pl-[8px]', active: true },
  { label: 'IP Address allocatio...', icon: CalcSheetIcon, look: 'w-[127px] ml-[4px] pl-[5px]' },
  { label: 'On-Screen Keyboard', icon: OskIcon, look: 'w-[127px] ml-[7px] pl-[5px]' },
  { label: 'Untitled - Paint', icon: PaintIcon, look: 'w-[127px] ml-[7px] pl-[5px]' },
];

const TaskButton = ({ task }: { task: Task }) => {
  const Icon = task.icon;
  return (
    <button
      className={`${task.look} flex h-full items-center gap-[3px] border-b-2 border-[#6cabdf] pt-[1px] whitespace-nowrap ${
        task.active ? 'bg-[#34373c]' : ''
      }`}
    >
      <Icon className={`size-5 shrink-0 ${task.active ? 'bg-white' : ''}`} />
      {task.label}
    </button>
  );
};

const Taskbar = () => (
  <footer className="flex h-[33px] shrink-0 items-center bg-[#00040a] font-['Open_Sans',sans-serif] text-[10px] text-[#f2f2f2]">
    <button aria-label="Start" className="flex w-10 justify-center"><WindowsIcon className="size-[14px]" /></button>
    <button aria-label="Task View" className="flex w-10 justify-center"><TaskViewIcon className="h-[14px] w-[18px]" /></button>
    <button aria-label="Edge" className="flex w-[43px] justify-center"><EdgeIcon className="size-[18px]" /></button>
    <TaskButton task={{ label: 'This PC', icon: ThisPcIcon, look: 'w-[127px] ml-[4px] pl-[5px]' }} />
    <TaskButton task={{ label: 'Network IP Address...', icon: FolderIcon, look: 'w-[127px] ml-[6px] pl-[5px]' }} />
    <button aria-label="Store" className="flex w-[46px] justify-center"><StoreIcon className="size-5" /></button>
    {TASKS.map((task) => (
      <TaskButton key={task.label} task={task} />
    ))}
    <div className="ml-auto flex h-full items-center">
      <svg viewBox="0 0 10 6" className="mr-2 h-[6px] w-[10px]"><path d="M.500 5.500L5 1L9.500 5.500" fill="none" stroke="#eee" strokeWidth="1.200" /></svg>
      <svg viewBox="0 0 14 12" className="mr-[6px] h-3 w-[14px]">
        <path d="M4 2H13.500V9H2.500V5M8 9V11.500M5 11.500H11" fill="none" stroke="#eee" />
        <path d="M0 0H4V4H0Z" fill="#aaa" />
      </svg>
      <svg viewBox="0 0 15 12" className="mr-[5px] h-3 w-[15px]">
        <path d="M.500 4H3L6 1V11L3 8H.500ZM8 4Q9.500 6 8 8M10 2.500Q12.500 6 10 9.500M12 1Q15.500 6 12 11" fill="none" stroke="#eee" />
      </svg>
      <time className="w-[54px] text-center leading-[15px]">01:03<br />06/01/2019</time>
      <button className="relative ml-3 h-5 w-5" aria-label="8 notifications">
        <svg viewBox="0 0 20 20" className="size-5">
          <path d="M1 2H14V12H7L4 15V12H1Z" fill="#fff" />
          <path d="M3 5H12M3 7.500H12M3 10H9" stroke="#222" />
        </svg>
        <span className="absolute top-[8px] left-[7px] size-[14px] rounded-full border border-[#777777] bg-[#333333] text-[9px] leading-3">8</span>
      </button>
      <div className="ml-[10px] h-full w-1 border-l border-[#555555]" />
    </div>
  </footer>
);

const App: React.FC = () => (
  <div className="relative flex min-h-screen flex-col overflow-hidden bg-[#efefef] font-['DejaVu_Sans_Condensed','DejaVu_Sans',sans-serif] text-[9px] text-[#1c1c1c]">
    <TitleBar />
    <MenuBar />
    <Toolbar />
    <div className="flex h-[15px] items-center border-t border-[#7a7a7a] bg-[#6375d6] pr-[3px] pl-[3px] font-bold text-white">
      <span className="w-[153px]">Acc Ref: 1</span>
      <span className="flex-1">Name: John</span>
      <span className="w-[118px]">Panel: Elite 48</span>
      <span className="w-[85px]">Version: 5.00.02</span>
      <button aria-label="Close account"><CloseSquare className="size-[11px]" /></button>
    </div>
    <main className="flex flex-1 pb-1">
      <Sidebar />
      <Workspace />
    </main>
    <StatusBar />
    <Taskbar />
    <OnScreenKeyboard />
  </div>
);

export default App;
